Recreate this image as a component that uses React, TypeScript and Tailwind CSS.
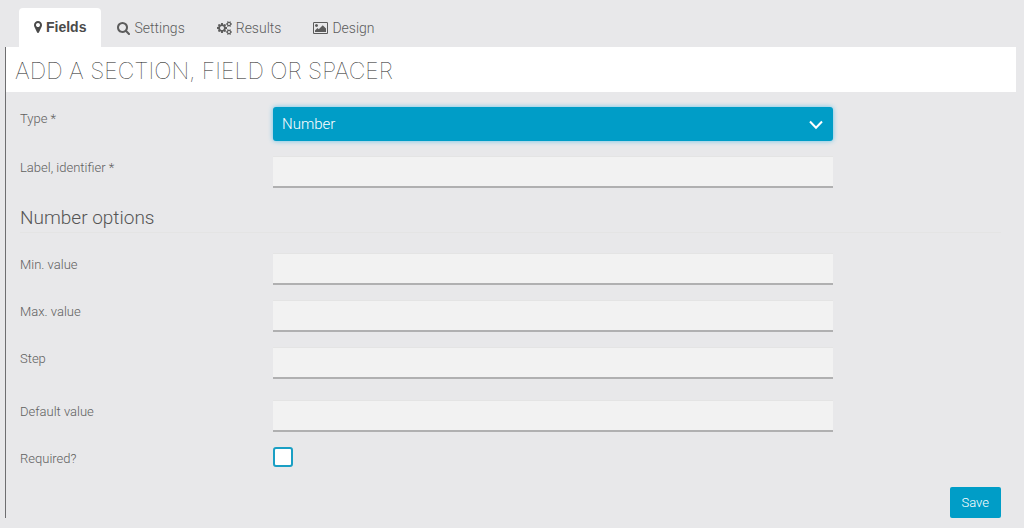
import React from 'react';

interface TabProps {
  icon: React.ReactNode;
  label: string;
  active?: boolean;
}

const Tab: React.FC<TabProps> = ({ icon, label, active }) => (
  <button
    type="button"
    role="tab"
    aria-selected={Boolean(active)}
    className={
      active
        ? "flex h-full items-center gap-1 rounded-t bg-white px-[15px] pb-px font-['Liberation_Sans',sans-serif] text-sm font-bold text-[#4a4a4a]"
        : 'flex h-full items-center gap-1 px-4 pt-px text-sm font-light text-[#5c5c5c]'
    }
  >
    {icon}
    {label}
  </button>
);

const MarkerIcon = () => (
  <svg viewBox="384 0 1024 1792" className="h-[14px] w-2" fill="currentColor" aria-hidden="true">
    <path d="M1152 640q0-106-75-181t-181-75-181 75-75 181 75 181 181 75 181-75 75-181zm256 0q0 109-33 179l-364 774q-16 33-47.5 52t-67.5 19-67.5-19-46.5-52l-365-774q-33-70-33-179 0-212 150-362t362-150 362 150 150 362z" />
  </svg>
);

const SearchIcon = () => (
  <svg viewBox="64 0 1664 1792" className="h-[14px] w-[13px]" fill="currentColor" aria-hidden="true">
    <path d="M1216 832q0-185-131.5-316.5t-316.5-131.5-316.5 131.5-131.5 316.5 131.5 316.5 316.5 131.5 316.5-131.5 131.5-316.5zm512 832q0 52-38 90t-90 38q-54 0-90-38l-343-342q-179 124-399 124-143 0-273.5-55.5t-225-150-150-225-55.5-273.5 55.5-273.5 150-225 225-150 273.5-55.5 273.5 55.5 225 150 150 225 55.5 273.5q0 220-124 399l343 343q37 37 37 90z" />
  </svg>
);

const CogsIcon = () => (
  <svg viewBox="0 0 1920 1792" className="h-[14px] w-[15px]" fill="currentColor" aria-hidden="true">
    <path d="M896 896q0-106-75-181t-181-75-181 75-75 181 75 181 181 75 181-75 75-181zm768 512q0-52-38-90t-90-38-90 38-38 90q0 53 37.5 90.5t90.5 37.5 90.5-37.5 37.5-90.5zm0-1024q0-52-38-90t-90-38-90 38-38 90q0 53 37.5 90.5t90.5 37.5 90.5-37.5 37.5-90.5zm-384 421v185q0 10-7 19.5t-16 10.5l-155 24q-11 35-32 76 34 48 90 115 7 11 7 20 0 12-7 19-23 30-82.5 89.5t-78.5 59.5q-11 0-21-7l-115-90q-37 19-77 31-11 108-23 155-7 24-30 24h-186q-11 0-20-7.5t-10-17.5l-23-153q-34-10-75-31l-118 89q-7 7-20 7-11 0-21-8-144-133-144-160 0-9 7-19 10-14 41-53t47-61q-23-44-35-82l-152-24q-10-1-17-9.5t-7-19.5v-185q0-10 7-19.5t16-10.5l155-24q11-35 32-76-34-48-90-115-7-11-7-20 0-12 7-20 22-30 82-89t79-59q11 0 21 7l115 90q34-18 77-32 11-108 23-154 7-24 30-24h186q11 0 20 7.5t10 17.5l23 153q34 10 75 31l118-89q8-7 20-7 11 0 21 8 144 133 144 160 0 8-7 19-12 16-42 54t-45 60q23 48 34 82l152 23q10 2 17 10.5t7 19.5zm640 533v140q0 16-149 31-12 27-30 52 51 113 51 138 0 4-4 7-122 71-124 71-8 0-46-47t-52-68q-20 2-30 2t-30-2q-14 21-52 68t-46 47q-2 0-124-71-4-3-4-7 0-25 51-138-18-25-30-52-149-15-149-31v-140q0-16 149-31 13-29 30-52-51-113-51-138 0-4 4-7 4-2 35-20t59-34 30-16q8 0 46 46.5t52 67.5q20-2 30-2t30 2q51-71 92-112l6-2q4 0 124 70 4 3 4 7 0 25-51 138 17 23 30 52 149 15 149 31zm0-1024v140q0 16-149 31-12 27-30 52 51 113 51 138 0 4-4 7-122 71-124 71-8 0-46-47t-52-68q-20 2-30 2t-30-2q-14 21-52 68t-46 47q-2 0-124-71-4-3-4-7 0-25 51-138-18-25-30-52-149-15-149-31v-140q0-16 149-31 13-29 30-52-51-113-51-138 0-4 4-7 4-2 35-20t59-34 30-16q8 0 46 46.5t52 67.5q20-2 30-2t30 2q51-71 92-112l6-2q4 0 124 70 4 3 4 7 0 25-51 138 17 23 30 52 149 15 149 31z" />
  </svg>
);

const PictureIcon = () => (
  <svg viewBox="-64 0 1920 1792" className="h-[14px] w-[15px]" fill="currentColor" aria-hidden="true">
    <path d="M576 576q0 80-56 136t-136 56-136-56-56-136 56-136 136-56 136 56 56 136zm1024 384v448h-1408v-192l320-320 160 160 512-512zm96-704h-1600q-13 0-22.5 9.5t-9.5 22.5v1216q0 13 9.5 22.5t22.5 9.5h1600q13 0 22.5-9.5t9.5-22.5v-1216q0-13-9.5-22.5t-22.5-9.5zm160 32v1216q0 66-47 113t-113 47h-1600q-66 0-113-47t-47-113v-1216q0-66 47-113t113-47h1600q66 0 113 47t47 113z" />
  </svg>
);

interface FieldRowProps {
  id: string;
  label: string;
  className?: string;
  children: React.ReactNode;
}

const FieldRow: React.FC<FieldRowProps> = ({ id, label, className = '', children }) => (
  <div className={`grid grid-cols-[253px_minmax(0,560px)] items-start ${className}`}>
    <label htmlFor={id} className="text-[13px] leading-[23px] font-light text-[#606060]">
      {label}
    </label>
    {children}
  </div>
);

const TextInput: React.FC<{ id: string }> = ({ id }) => (
  <input
    id={id}
    type="text"
    className="h-8 w-full border-t border-b-2 border-t-[#e4e4e4] border-b-[#b0b0b1] bg-[#f2f2f2] px-2 text-sm outline-none"
  />
);

export default function App() {
  return (
    <div className="min-h-screen bg-[#e8e8ea] pt-2 pr-2 pb-[10px] pl-[5px] font-['Roboto','Liberation_Sans',sans-serif]">
      <div role="tablist" className="flex h-[39px] pl-[14px]">
        <Tab active label="Fields" icon={<MarkerIcon />} />
        <Tab label="Settings" icon={<SearchIcon />} />
        <Tab label="Results" icon={<CogsIcon />} />
        <Tab label="Design" icon={<PictureIcon />} />
      </div>

      <form className="border-l border-[#6e6e70]" onSubmit={(e) => e.preventDefault()}>
        <h1 className="bg-white pt-1 pl-[9px] font-['Inter','Liberation_Sans',sans-serif] text-[23px] leading-[41px] font-thin text-[#222] uppercase">
          Add a section, field or spacer
        </h1>

        <div className="flex flex-col gap-[15px] pt-[15px] pr-[15px] pl-[14px]">
          <FieldRow id="type" label="Type *">
            <div className="relative">
              <select
                id="type"
                defaultValue="number"
                className="block h-[34px] w-full appearance-none rounded-[3px] bg-[#009dc7] px-[9px] pt-px text-[15px] font-light text-white shadow-[0_0_5px_#66c2e6] outline-none"
              >
                <option value="number">Number</option>
              </select>
              <svg
                viewBox="0 0 14 10"
                className="pointer-events-none absolute top-[13px] right-[10px] h-[10px] w-[14px]"
                fill="none"
                stroke="white"
                strokeWidth="2"
                aria-hidden="true"
              >
                <path d="M1 1.5 7 7.8 13 1.5" />
              </svg>
            </div>
          </FieldRow>
          <FieldRow id="label" label="Label, identifier *">
            <TextInput id="label" />
          </FieldRow>

          <h2 className="border-b border-[#e4e4e4] text-[19px] leading-[29px] font-light text-[#555]">
            Number options
          </h2>

          <FieldRow id="min" label="Min. value" className="mt-[5px]">
            <TextInput id="min" />
          </FieldRow>
          <FieldRow id="max" label="Max. value">
            <TextInput id="max" />
          </FieldRow>
          <FieldRow id="step" label="Step">
            <TextInput id="step" />
          </FieldRow>
          <FieldRow id="default" label="Default value" className="mt-[6px]">
            <TextInput id="default" />
          </FieldRow>
          <FieldRow id="required" label="Required?">
            <input
              id="required"
              type="checkbox"
              className="size-5 appearance-none rounded-[3px] border-2 border-[#1a9fc4] bg-white checked:bg-[#009dc7]"
            />
          </FieldRow>

          <div className="mt-[2px] flex justify-end">
            <button
              type="submit"
              className="h-[31px] rounded-[2px] bg-[#009dc7] px-3 text-[13px] font-light text-white"
            >
              Save
            </button>
          </div>
        </div>
      </form>
    </div>
  );
}
